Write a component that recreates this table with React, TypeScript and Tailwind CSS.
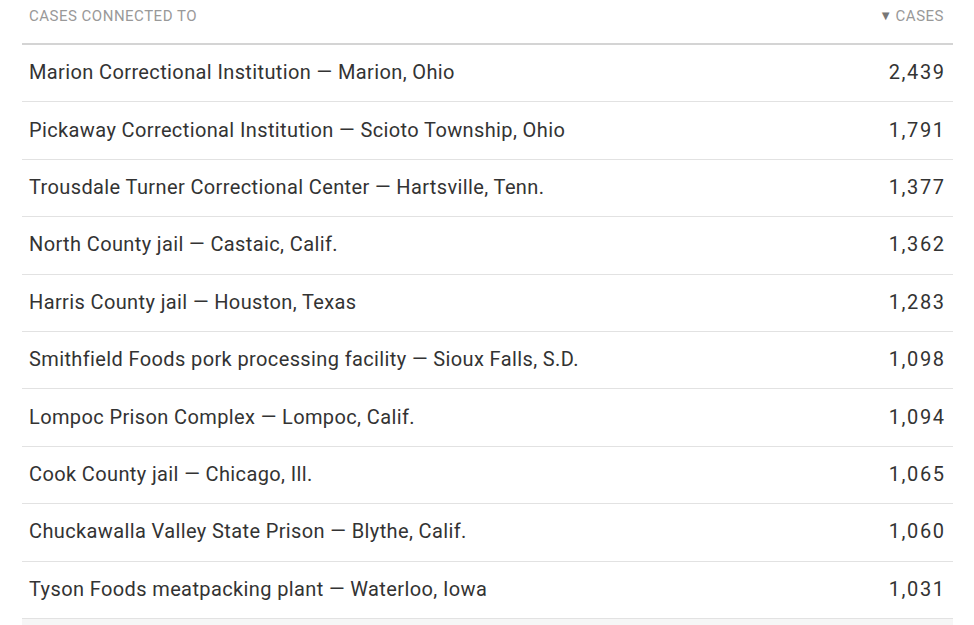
import React from "react";

const rows: [string, string][] = [
  ["Marion Correctional Institution — Marion, Ohio", "2,439"],
  ["Pickaway Correctional Institution — Scioto Township, Ohio", "1,791"],
  ["Trousdale Turner Correctional Center — Hartsville, Tenn.", "1,377"],
  ["North County jail — Castaic, Calif.", "1,362"],
  ["Harris County jail — Houston, Texas", "1,283"],
  ["Smithfield Foods pork processing facility — Sioux Falls, S.D.", "1,098"],
  ["Lompoc Prison Complex — Lompoc, Calif.", "1,094"],
  ["Cook County jail — Chicago, Ill.", "1,065"],
  ["Chuckawalla Valley State Prison — Blythe, Calif.", "1,060"],
  ["Tyson Foods meatpacking plant — Waterloo, Iowa", "1,031"],
];

export default function App() {
  return (
    <div className="w-[974px] h-[625px] overflow-hidden bg-white pl-[22px]" style={{ fontFamily: "Roboto, 'Liberation Sans', sans-serif" }}>
      <div className="w-[931px]">
        <div className="flex justify-between items-center h-[45px] border-b-2 border-[#d4d4d4] pl-[7px] pr-[9px] pb-[11px] text-[15px] text-[#999] tracking-[0.5px]">
          <span>CASES CONNECTED TO</span>
          <span className="flex items-center"><span className="text-[13px] mr-[3px] text-[#777]">▼</span>CASES</span>
        </div>
        {rows.map(([name, n]) => (
          <div key={name} className="flex justify-between items-center h-[57.4px] border-b border-[#e2e2e2] pl-[7px] pr-[9px] pb-[2px] text-[20px] text-[#333]">
            <span className="tracking-[0.38px]">{name}</span>
            <span className="tracking-[1.6px] mr-[-1.6px]">{n}</span>
          </div>
        ))}
        <div className="h-[10px] bg-[#f6f6f6]" />
      </div>
    </div>
  );
}
